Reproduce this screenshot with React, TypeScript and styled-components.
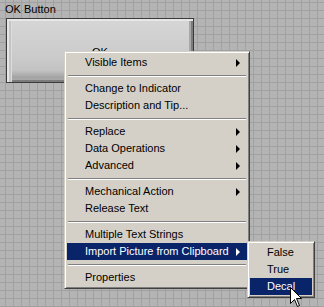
import React from 'react';
import styled, { createGlobalStyle } from 'styled-components';

const GlobalStyle = createGlobalStyle`
  html, body {
    margin: 0;
    padding: 0;
  }
  body {
    width: 324px;
    height: 307px;
    overflow: hidden;
    font-family: "Liberation Sans", Arial, sans-serif;
    font-size: 11px;
  }
`;

type Entry =
  | { kind: 'item'; label: string; sub?: boolean; active?: boolean }
  | { kind: 'sep' };

const MAIN_MENU: Entry[] = [
  { kind: 'item', label: 'Visible Items', sub: true },
  { kind: 'sep' },
  { kind: 'item', label: 'Change to Indicator' },
  { kind: 'item', label: 'Description and Tip...' },
  { kind: 'sep' },
  { kind: 'item', label: 'Replace', sub: true },
  { kind: 'item', label: 'Data Operations', sub: true },
  { kind: 'item', label: 'Advanced', sub: true },
  { kind: 'sep' },
  { kind: 'item', label: 'Mechanical Action', sub: true },
  { kind: 'item', label: 'Release Text' },
  { kind: 'sep' },
  { kind: 'item', label: 'Multiple Text Strings' },
  { kind: 'item', label: 'Import Picture from Clipboard', sub: true, active: true },
  { kind: 'sep' },
  { kind: 'item', label: 'Properties' },
];

const SUB_MENU: Entry[] = [
  { kind: 'item', label: 'False' },
  { kind: 'item', label: 'True' },
  { kind: 'item', label: 'Decal', active: true },
];

const Canvas = styled.div`
  position: relative;
  width: 324px;
  height: 307px;
  box-sizing: border-box;
  padding: 3px 0 0 5px;
  background-color: #b4b4b4;
  background-image:
    linear-gradient(to right, #a0a0a0 1px, transparent 1px),
    linear-gradient(to bottom, #a0a0a0 1px, transparent 1px);
  background-size: 8px 8px;
  background-position: 5px 2px;
`;

const Label = styled.div`
  color: #000;
  line-height: 13px;
  height: 13px;
`;

const OkButton = styled.div`
  margin: 2px 0 0 1px;
  width: 188px;
  height: 65px;
  box-sizing: border-box;
  border: 1px solid #3a3a3a;
  background: linear-gradient(to bottom, #d6d6d6 0%, #cbcbcb 60%, #c2c2c2 82%, #8e8e8e 100%);
  box-shadow:
    inset 2px 2px 0 #e6e6e6,
    inset 4px 0 0 #c4c4c4,
    inset 5px 0 0 #dcdcdc,
    inset -2px -2px 0 #7c7c7c,
    inset -4px -4px 0 #a8a8a8;
  display: flex;
  align-items: center;
  justify-content: center;
  color: #000;
  padding-top: 2px;
`;

const Menu = styled.div<{ $x: number; $y: number; $w: number }>`
  position: absolute;
  left: ${(p) => p.$x}px;
  top: ${(p) => p.$y}px;
  width: ${(p) => p.$w}px;
  box-sizing: border-box;
  background: #d4d0c8;
  border: 1px solid;
  border-color: #d4d0c8 #404040 #404040 #d4d0c8;
  box-shadow: inset 1px 1px 0 #ffffff, inset -1px -1px 0 #808080;
  padding: 2px;
  display: flex;
  flex-direction: column;
`;

const Item = styled.div<{ $active?: boolean; $indent: number }>`
  height: 17px;
  line-height: 17px;
  display: flex;
  align-items: center;
  justify-content: space-between;
  padding: 0 7px 0 ${(p) => p.$indent}px;
  white-space: nowrap;
  color: ${(p) => (p.$active ? '#ffffff' : '#000000')};
  background: ${(p) => (p.$active ? '#0a246a' : 'transparent')};
`;

const Arrow = styled.span<{ $active?: boolean }>`
  width: 0;
  height: 0;
  border-top: 4px solid transparent;
  border-bottom: 4px solid transparent;
  border-left: 4px solid ${(p) => (p.$active ? '#ffffff' : '#000000')};
`;

const Separator = styled.div`
  height: 9px;
  display: flex;
  align-items: center;
  padding: 0 1px;
  &::after {
    content: '';
    flex: 1;
    height: 1px;
    border-top: 1px solid #808080;
    border-bottom: 1px solid #ffffff;
    height: 0;
  }
`;

const Cursor = styled.svg`
  position: absolute;
  left: 290px;
  top: 287px;
`;

function MenuList({ entries, indent }: { entries: Entry[]; indent: number }) {
  return (
    <>
      {entries.map((e, i) =>
        e.kind === 'sep' ? (
          <Separator key={i} />
        ) : (
          <Item key={i} $active={e.active} $indent={indent}>
            <span>{e.label}</span>
            {e.sub && <Arrow $active={e.active} />}
          </Item>
        )
      )}
    </>
  );
}

export default function App() {
  return (
    <>
      <GlobalStyle />
      <Canvas>
        <Label>OK Button</Label>
        <OkButton>OK</OkButton>

        <Menu $x={64} $y={51} $w={186}>
          <MenuList entries={MAIN_MENU} indent={18} />
        </Menu>

        <Menu $x={247} $y={241} $w={68}>
          <MenuList entries={SUB_MENU} indent={17} />
        </Menu>

        <Cursor width="13" height="21" viewBox="0 0 13 21">
          <path
            d="M0.5 0.5 L0.5 16.5 L4.5 12.5 L7.5 19.5 L9.5 18.5 L6.5 11.5 L11.5 11.5 Z"
            fill="#ffffff"
            stroke="#000000"
            strokeWidth="1"
          />
        </Cursor>
      </Canvas>
    </>
  );
}
